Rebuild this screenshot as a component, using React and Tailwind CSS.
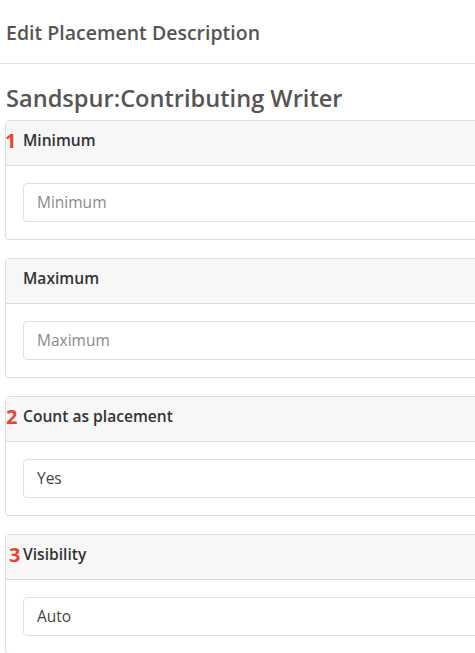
import React from "react";

const font = { fontFamily: '"Open Sans", "Noto Sans", sans-serif' };

function Card({ num, label, value, placeholder, numClass }) {
  return (
    <div className="w-[540px] rounded-[4px] border border-[#dedede] bg-white">
      <div className="flex h-[45px] items-center border-b border-[#dcdcdc] bg-[#f7f7f7] pb-[4px] pl-[17px]">
        {num ? (
          <span className={`-ml-[18px] w-[18px] text-[20px] font-bold leading-none text-[#e8452c] ${numClass}`}>{num}</span>
        ) : null}
        <span className="text-[15.6px] font-semibold text-[#333]">{label}</span>
      </div>
      <div className="px-[17px] py-[17px]">
        <div className="flex h-[39px] items-center rounded-[4px] border border-[#e0e0e0] px-[13px] text-[15.5px]">
          {value ? (
            <span className="text-[#444]">{value}</span>
          ) : (
            <span className="text-[#8a8a8a]">{placeholder}</span>
          )}
        </div>
      </div>
    </div>
  );
}

export default function App() {
  return (
    <div className="h-[653px] w-[475px] overflow-hidden bg-white" style={font}>
      <div className="flex h-[64px] items-center border-b border-[#e3e3e3] pl-[6px] pt-[3px]">
        <span className="text-[19.5px] font-semibold text-[#555]">Edit Placement Description</span>
      </div>
      <div className="pl-[5px]">
        <div className="mt-[18px] pl-[1px] text-[23.6px] font-semibold leading-[32px] text-[#555]">
          Sandspur:Contributing Writer
        </div>
        <div className="mt-[6px] flex flex-col gap-[18px]">
          <Card num="1" label="Minimum" placeholder="Minimum" numClass="" />
          <Card label="Maximum" placeholder="Maximum" />
          <Card num="2" label="Count as placement" value="Yes" numClass="pl-[1px]" />
          <Card num="3" label="Visibility" value="Auto" numClass="pl-[4px]" />
        </div>
      </div>
    </div>
  );
}
